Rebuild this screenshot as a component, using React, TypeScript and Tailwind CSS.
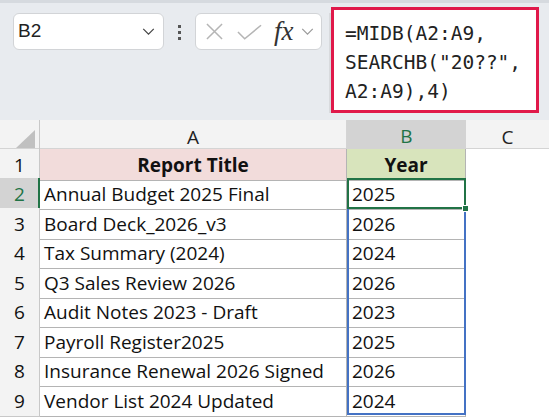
import React from "react";

const rows = [
  { n: 2, title: "Annual Budget 2025 Final", year: "2025" },
  { n: 3, title: "Board Deck_2026_v3", year: "2026" },
  { n: 4, title: "Tax Summary (2024)", year: "2024" },
  { n: 5, title: "Q3 Sales Review 2026", year: "2026" },
  { n: 6, title: "Audit Notes 2023 - Draft", year: "2023" },
  { n: 7, title: "Payroll Register2025", year: "2025" },
  { n: 8, title: "Insurance Renewal 2026 Signed", year: "2026" },
  { n: 9, title: "Vendor List 2024 Updated", year: "2024" },
];

const cellFont = { fontFamily: "'Open Sans', 'Liberation Sans', sans-serif" };

function Chevron({ className }: { className?: string }) {
  return (
    <svg viewBox="0 0 14 8" className={className} fill="none" stroke="currentColor" strokeWidth="1.4">
      <path d="M1 1l6 6 6-6" />
    </svg>
  );
}

function Toolbar() {
  return (
    <div className="flex h-[120px] items-start border-t-[3px] border-[#d6dadf] bg-[#e8ebef] pl-[13px]">
      <div className="mt-[10px] flex h-[37px] w-[151px] items-center justify-between rounded-[6px] border border-[#d2d4d7] bg-white pl-[4px] pr-[8px]">
        <span className="text-[19px] text-[#222]" style={{ fontFamily: "'Liberation Sans', sans-serif" }}>B2</span>
        <Chevron className="h-[7px] w-[13px] text-[#444]" />
      </div>
      <div className="mx-[14px] mt-[22px] flex flex-col gap-[3px]">
        <span className="h-[3px] w-[3px] bg-[#555]" />
        <span className="h-[3px] w-[3px] bg-[#555]" />
        <span className="h-[3px] w-[3px] bg-[#555]" />
      </div>
      <div className="mt-[10px] flex h-[37px] w-[127px] items-center rounded-[6px] border border-[#d2d4d7] bg-white pl-[9px]">
        <svg viewBox="0 0 20 18" className="h-[17px] w-[19px] text-[#b5b5b5]" fill="none" stroke="currentColor" strokeWidth="1.6">
          <path d="M2 1l16 16M18 1L2 17" />
        </svg>
        <svg viewBox="0 0 26 16" className="ml-[13px] h-[16px] w-[25px] text-[#b5b5b5]" fill="none" stroke="currentColor" strokeWidth="1.6">
          <path d="M1 8l7 7L25 1" />
        </svg>
        <span
          className="ml-[12px] text-[27px] italic leading-none text-[#333]"
          style={{ fontFamily: "'Liberation Serif', serif" }}
        >
          fx
        </span>
        <Chevron className="ml-[7px] h-[7px] w-[13px] text-[#9a9a9a]" />
      </div>
      <div className="ml-[7px] mt-[10px] h-[100px] w-[2px] bg-[#d8dadd]" />
      <div className="mt-[4px] h-[106px] w-[208px] border-[3px] border-[#e0194a] bg-white pl-[11px] pt-[9px]">
        <div
          className="text-[19.5px] leading-[29px] text-[#222]"
          style={{ fontFamily: "'DejaVu Sans Mono', 'Liberation Mono', monospace" }}
        >
          <div>=MIDB(A2:A9,</div>
          <div>SEARCHB("20??",</div>
          <div>A2:A9),4)</div>
        </div>
      </div>
    </div>
  );
}

export default function App() {
  const heights = [29, 30, 29, 30, 29, 30, 29, 30, 29];
  return (
    <div className="h-[417px] w-[549px] overflow-hidden bg-white">
      <Toolbar />
      <div className="relative" style={cellFont}>
        <div className="grid h-[29px] grid-cols-[40px_307px_119px_83px] border-b border-[#d4d4d4] bg-[#f3f3f3] text-[19px] text-[#222]">
          <div className="relative border-r border-[#c8c8c8]">
            <div className="absolute bottom-[5px] right-[4px] h-0 w-0 border-b-[18px] border-l-[19px] border-b-[#c0c0c0] border-l-transparent" />
          </div>
          <div className="flex items-center justify-center border-r border-[#d4d4d4] pt-[2px]">A</div>
          <div className="flex items-center justify-center border-b-[2px] border-b-[#217346] bg-[#d3d3d3] pt-[2px] text-[#217346]">B</div>
          <div className="flex items-center justify-center pt-[2px]">C</div>
        </div>
        <div className="grid h-[29px] grid-cols-[40px_307px_119px_83px] text-[19px] text-[#111]">
          <div className="flex items-center justify-center border-b border-r border-[#c8c8c8] bg-[#f3f3f3] pt-[2px]">1</div>
          <div className="flex items-center justify-center border-b border-r border-[#b4b4b4] bg-[#f2dcdb] pt-[2px] font-bold">Report Title</div>
          <div className="flex items-center justify-center border-b border-r border-[#b4b4b4] bg-[#d8e4bc] pt-[2px] font-bold">Year</div>
          <div />
        </div>
        {rows.map((r, i) => {
          const active = r.n === 2;
          return (
            <div
              key={r.n}
              className="grid grid-cols-[40px_307px_119px_83px] text-[19px] text-[#111]"
              style={{ height: heights[i + 1] }}
            >
              <div
                className={
                  active
                    ? "flex items-center justify-center border-b border-r-[2px] border-b-[#c8c8c8] border-r-[#217346] bg-[#d3d3d3] pl-[1px] pt-[2px] text-[#217346]"
                    : "flex items-center justify-center border-b border-r border-[#c8c8c8] bg-[#f3f3f3] pt-[2px]"
                }
              >
                {r.n}
              </div>
              <div className="flex items-center whitespace-nowrap border-b border-r border-[#b4b4b4] pl-[4px] pt-[2px]">{r.title}</div>
              <div className="flex items-center border-b border-r border-[#b4b4b4] pl-[5px] pt-[2px]">{r.year}</div>
              <div />
            </div>
          );
        })}
        <div className="pointer-events-none absolute left-[347px] top-[58px] h-[237px] w-[119px] border-2 border-[#4472c4]" />
        <div className="pointer-events-none absolute left-[347px] top-[58px] h-[31px] w-[119px] border-2 border-[#217346]">
          <div className="absolute -bottom-[5px] -right-[5px] h-[7px] w-[7px] border border-white bg-[#217346]" />
        </div>
      </div>
    </div>
  );
}
